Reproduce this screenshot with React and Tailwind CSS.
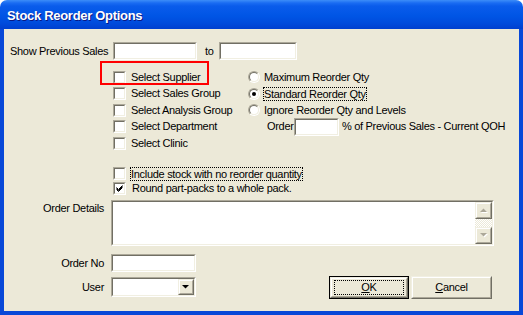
import React from "react";

function Sunken({ className = "", innerClass = "", children }) {
  return (
    <div className={"border border-t-[#ACA899] border-l-[#ACA899] border-b-white border-r-white flex " + className}>
      <div className={"flex-1 min-w-0 border border-t-[#716F64] border-l-[#716F64] border-b-[#F1EFE2] border-r-[#F1EFE2] bg-white flex " + innerClass}>
        {children}
      </div>
    </div>
  );
}

function Raised({ className = "", children }) {
  return (
    <div className={"border border-t-[#F1EFE2] border-l-[#F1EFE2] border-b-[#716F64] border-r-[#716F64] flex " + className}>
      <div className="flex-1 border border-t-white border-l-white border-b-[#ACA899] border-r-[#ACA899] bg-[#ECE9D8] flex items-center justify-center">
        {children}
      </div>
    </div>
  );
}

function Checkbox({ checked }) {
  return (
    <Sunken className="w-[13px] h-[13px] shrink-0">
      {checked && (
        <svg viewBox="0 0 9 9" className="w-full h-full">
          <path d="M1.5 3.5 L3.5 5.5 L7.5 1.5 M1.5 4.5 L3.5 6.5 L7.5 2.5 M1.5 5.5 L3.5 7.5 L7.5 3.5" stroke="#000" strokeWidth="1" fill="none" />
        </svg>
      )}
    </Sunken>
  );
}

function Radio({ checked }) {
  return (
    <div className="w-[12px] h-[12px] shrink-0 rounded-full border border-t-[#ACA899] border-l-[#ACA899] border-b-white border-r-white">
      <div className="w-full h-full rounded-full border border-t-[#716F64] border-l-[#716F64] border-b-[#F1EFE2] border-r-[#F1EFE2] bg-white flex items-center justify-center">
        {checked && <div className="w-[4px] h-[4px] rounded-full bg-black" />}
      </div>
    </div>
  );
}

function CheckRow({ label, checked, focus, h = "h-[16.5px]", gap = "ml-[5px]" }) {
  return (
    <div className={"flex items-center " + h}>
      <Checkbox checked={checked} />
      {focus ? (
        <span className="ml-[4px] border border-dotted border-black leading-[12px] px-0">{label}</span>
      ) : (
        <span className={gap}>{label}</span>
      )}
    </div>
  );
}

function Arrow({ dir, color = "#ACA899", shadow = true }) {
  const d = dir === "up" ? "M0 4 L3.5 0.5 L7 4 Z" : "M0 0 L7 0 L3.5 3.5 Z";
  return (
    <svg width="8" height="5" viewBox="0 0 8 5" className="overflow-visible">
      {shadow && <path d={d} fill="#fff" transform="translate(1,1)" />}
      <path d={d} fill={color} />
    </svg>
  );
}

export default function App() {
  return (
    <div className="w-[523px] h-[315px] flex flex-col bg-white font-['Liberation_Sans',Arial,sans-serif]">
      <div className="h-[29px] shrink-0 rounded-t-[7px] bg-[linear-gradient(to_bottom,#3C8DF8_0px,#1A6CF2_3px,#0A5CEB_6px,#0055E5_55%,#004BDC_80%,#003FCF_100%)] flex items-center pl-[7px] pt-[2px]">
        <span className="text-white font-bold text-[13px] tracking-[-0.3px] [text-shadow:1px_1px_0_#0A1883]">
          Stock Reorder Options
        </span>
      </div>

      <div className="relative flex-1 flex flex-col bg-[#ECE9D8] border-x-4 border-b-4 border-[#0848D8] text-[11px] tracking-[-0.3px] text-black leading-none">
        {/* Show previous sales */}
        <div className="mt-[13px] h-[18px] flex items-center">
          <span className="w-[109px] pl-[6px] shrink-0">Show Previous Sales</span>
          <Sunken className="w-[84px] h-[18px]" />
          <span className="w-[22px] pl-[8px] shrink-0">to</span>
          <Sunken className="w-[78px] h-[18px]" />
        </div>

        {/* Options */}
        <div className="mt-[9px] h-[83px] flex">
          <div className="ml-[109px] w-[135px] flex flex-col">
            <CheckRow label="Select Supplier" />
            <CheckRow label="Select Sales Group" />
            <CheckRow label="Select Analysis Group" />
            <CheckRow label="Select Department" />
            <CheckRow label="Select Clinic" />
          </div>
          <div className="flex flex-col">
            <div className="h-[16.5px] flex items-center">
              <Radio />
              <span className="ml-[4px]">Maximum Reorder Qty</span>
            </div>
            <div className="h-[16.5px] flex items-center">
              <Radio checked />
              <span className="ml-[3px] border border-dotted border-black leading-[12px]">Standard Reorder Qty</span>
            </div>
            <div className="h-[16.5px] flex items-center">
              <Radio />
              <span className="ml-[4px]">Ignore Reorder Qty and Levels</span>
            </div>
            <div className="-mt-[1px] h-[18px] flex items-center pl-[19px]">
              <span className="w-[27px]">Order</span>
              <Sunken className="w-[45px] h-[18px]" />
              <span className="ml-[3px]">% of Previous Sales - Current QOH</span>
            </div>
          </div>
        </div>

        {/* Include / Round */}
        <div className="mt-[14px] ml-[109px] flex flex-col">
          <CheckRow label="Include stock with no reorder quantity" focus h="h-[15px]" />
          <CheckRow label="Round part-packs to a whole pack." checked h="h-[15px]" gap="ml-[6px]" />
        </div>

        {/* Order details */}
        <div className="mt-[4px] flex">
          <span className="w-[100px] text-right pt-[3px] shrink-0">Order Details</span>
          <Sunken className="ml-[7px] w-[383px] h-[46px]" innerClass="justify-end">
            <div className="w-[17px] flex flex-col">
              <Raised className="h-[17px]">
                <Arrow dir="up" />
              </Raised>
              <div className="flex-1 [background:repeating-conic-gradient(#ECE9D8_0_25%,#ffffff_0_50%)_0_0/2px_2px]" />
              <Raised className="h-[17px]">
                <Arrow dir="down" />
              </Raised>
            </div>
          </Sunken>
        </div>

        {/* Bottom */}
        <div className="mt-[8px] flex">
          <div className="flex flex-col">
            <div className="h-[18px] flex items-center">
              <span className="w-[100px] text-right shrink-0">Order No</span>
              <Sunken className="ml-[7px] w-[85px] h-[18px]" />
            </div>
            <div className="mt-[5px] h-[20px] flex items-center">
              <span className="w-[100px] text-right shrink-0">User</span>
              <Sunken className="ml-[7px] w-[85px] h-[20px]" innerClass="justify-end">
                <Raised className="w-[16px]">
                  <Arrow dir="down" color="#000" shadow={false} />
                </Raised>
              </Sunken>
            </div>
          </div>
          <div className="ml-auto mr-[27px] mt-[22px] flex gap-[2px]">
            <div className="w-[80px] h-[23px] border border-black flex">
              <Raised className="flex-1">
                <div className="w-[70px] h-[15px] border border-dotted border-black flex items-center justify-center text-[11px]">
                  <span><span className="underline">O</span>K</span>
                </div>
              </Raised>
            </div>
            <Raised className="w-[81px] h-[23px]">
              <span><span className="underline">C</span>ancel</span>
            </Raised>
          </div>
        </div>

        {/* annotation */}
        <div className="absolute left-[96px] top-[32px] w-[109px] h-[24px] border-2 border-[#FF0000]" />
      </div>
    </div>
  );
}
